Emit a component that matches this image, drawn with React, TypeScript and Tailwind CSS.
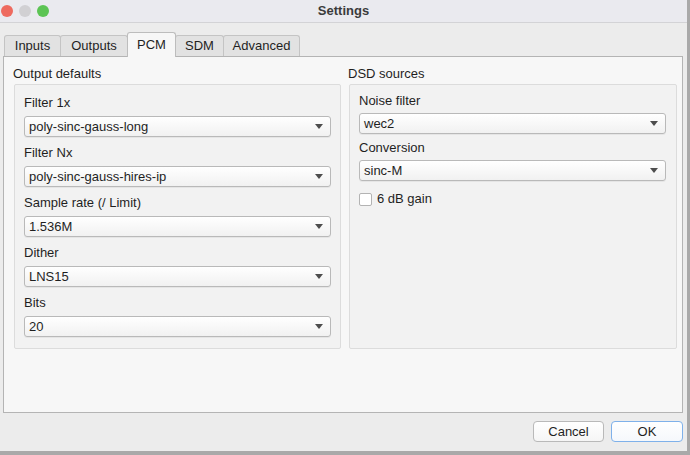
import React from "react";

const font = { fontFamily: '"Liberation Sans", Arial, sans-serif' };

function Combo({ value }: { value: string }) {
  return (
    <div className="flex h-[21px] items-center justify-between rounded-[3px] border border-[#b9b9b9] bg-gradient-to-b from-[#ffffff] to-[#f1f1f1] pl-[4px] pr-[7px] text-[13px] text-[#1f1f1f] shadow-[0_1px_0_rgba(0,0,0,0.05)]">
      <span>{value}</span>
      <svg width="8" height="5" viewBox="0 0 8 5">
        <path d="M0 0 H8 L4 5 Z" fill="#4d4d4d" />
      </svg>
    </div>
  );
}

function Field({ label, value, first }: { label: string; value: string; first?: boolean }) {
  return (
    <div className={first ? "" : "mt-[8px]"}>
      <div className="h-[16px] text-[13px] leading-[16px] text-[#1f1f1f]">{label}</div>
      <div className="mt-[5px]">
        <Combo value={value} />
      </div>
    </div>
  );
}

const tabs = [
  { name: "Inputs", w: "w-[57px]" },
  { name: "Outputs", w: "w-[68px]" },
  { name: "PCM", w: "w-[49px]" },
  { name: "SDM", w: "w-[49px]" },
  { name: "Advanced", w: "w-[77px]" },
];

export default function App() {
  return (
    <div className="h-[455px] w-[690px] overflow-hidden bg-[#a9a9a9]" style={font}>
      <div className="flex h-[451px] w-[687px] flex-col bg-[#ececec]">
        <div className="relative flex h-[23px] shrink-0 items-center border-b border-[#d3d3d6] bg-[#eaeaef]">
          <div className="ml-[1px] flex gap-[6px]">
            <span className="h-[12px] w-[12px] rounded-full bg-[#ee6a5f]" />
            <span className="h-[12px] w-[12px] rounded-full bg-[#d1d0d3]" />
            <span className="h-[12px] w-[12px] rounded-full bg-[#5cc454]" />
          </div>
          <div className="absolute inset-x-0 top-0 flex h-[22px] items-center justify-center text-[13px] font-bold text-[#3b3b3b]">
            Settings
          </div>
        </div>

        <div className="flex flex-1 flex-col px-[3px] pt-[9px]">
          <div className="flex h-[24px] items-end pl-[1px]">
            {tabs.map((t, i) =>
              t.name === "PCM" ? (
                <div
                  key={t.name}
                  className={`relative -mb-px -ml-px flex h-[25px] items-center justify-center rounded-t-[3px] border border-b-0 border-[#bdbdbd] bg-[#f7f7f7] text-[13px] text-[#1f1f1f] ${t.w}`}
                >
                  {t.name}
                </div>
              ) : (
                <div
                  key={t.name}
                  className={`flex h-[21px] items-center justify-center rounded-t-[3px] border border-b-0 border-[#c4c4c4] bg-[#e2e2e2] text-[13px] text-[#1f1f1f] ${i === 0 ? "" : "-ml-px"} ${t.w}`}
                >
                  {t.name}
                </div>
              )
            )}
          </div>

          <div className="h-[357px] w-[680px] border border-[#b4b4b4] bg-[#f7f7f7] pl-[9px] pr-[5px] pt-[9px]">
            <div className="grid grid-cols-[328px_329px] gap-x-[7px]">
              <div>
                <div className="h-[16px] text-[13px] leading-[16px] text-[#1f1f1f]">Output defaults</div>
                <div className="ml-[1px] mt-[2px] h-[265px] rounded-[2px] border border-[#dcdcdc] bg-[#f2f2f2] px-[9px] pt-[10px]">
                  <Field first label="Filter 1x" value="poly-sinc-gauss-long" />
                  <Field label="Filter Nx" value="poly-sinc-gauss-hires-ip" />
                  <Field label="Sample rate (/ Limit)" value="1.536M" />
                  <Field label="Dither" value="LNS15" />
                  <Field label="Bits" value="20" />
                </div>
              </div>
              <div>
                <div className="h-[16px] text-[13px] leading-[16px] text-[#1f1f1f]">DSD sources</div>
                <div className="ml-[1px] mt-[2px] h-[265px] rounded-[2px] border border-[#dcdcdc] bg-[#f2f2f2] pl-[9px] pr-[10px] pt-[8px]">
                  <div>
                    <div className="h-[16px] text-[13px] leading-[16px] text-[#1f1f1f]">Noise filter</div>
                    <div className="mt-[4px]">
                      <Combo value="wec2" />
                    </div>
                  </div>
                  <div className="mt-[6px]">
                    <div className="h-[16px] text-[13px] leading-[16px] text-[#1f1f1f]">Conversion</div>
                    <div className="mt-[4px]">
                      <Combo value="sinc-M" />
                    </div>
                  </div>
                  <div className="mt-[10px] flex items-center gap-[5px]">
                    <span className="h-[13px] w-[13px] rounded-[2px] border border-[#b3b3b3] bg-white" />
                    <span className="text-[13px] leading-[16px] text-[#1f1f1f]">6 dB gain</span>
                  </div>
                </div>
              </div>
            </div>
          </div>

          <div className="mt-[8px] flex justify-end gap-[7px] pr-[1px]">
            <div className="flex h-[21px] w-[71px] items-center justify-center rounded-[4px] border border-[#b9b9b9] bg-gradient-to-b from-white to-[#f5f5f5] text-[13px] text-[#1f1f1f]">
              Cancel
            </div>
            <div className="flex h-[21px] w-[72px] items-center justify-center rounded-[4px] border border-[#7fb1ea] bg-gradient-to-b from-white to-[#f5f8fc] text-[13px] text-[#1f1f1f]">
              OK
            </div>
          </div>
        </div>
      </div>
    </div>
  );
}
